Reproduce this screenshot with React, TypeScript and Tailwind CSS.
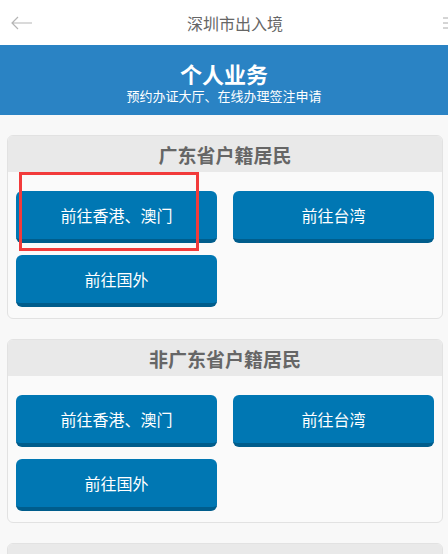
import React from "react";

const font = { fontFamily: '"Noto Sans CJK SC", "Noto Sans", sans-serif' };

function Btn({ label }: { label: string }) {
  return (
    <div className="h-[52px] rounded-[6px] bg-[#0077b3] border-b-4 border-[#005d8c] flex items-center justify-center text-white text-[16px] leading-none">
      {label}
    </div>
  );
}

function Card({ title, partial }: { title: string; partial?: boolean }) {
  return (
    <div className="w-[436px] rounded-[6px] border border-[#e2e2e2] bg-[#fafafa] overflow-hidden shrink-0">
      <div className="h-[36px] bg-[#e9e9e9] flex items-center justify-center text-[19px] font-bold text-[#666666] leading-none">
        {title}
      </div>
      {!partial && (
        <div className="pt-[19px] pb-[11px] px-[8px] grid grid-cols-2 gap-x-[16px] gap-y-[12px]">
          <Btn label="前往香港、澳门" />
          <Btn label="前往台湾" />
          <Btn label="前往国外" />
        </div>
      )}
    </div>
  );
}

export default function App() {
  return (
    <div className="relative w-[448px] h-[554px] overflow-hidden bg-[#f8f8f8]" style={font}>
      <div className="h-[45px] bg-white flex items-center overflow-hidden">
        <svg className="ml-[11px] shrink-0" width="21" height="14" viewBox="0 0 21 14">
          <path d="M1 7 H21 M7 1 L1 7 L7 13" stroke="#b5b5b5" strokeWidth="1.2" fill="none" />
        </svg>
        <div className="ml-[155px] shrink-0 text-[16px] text-[#666666] leading-none">深圳市出入境</div>
        <svg className="ml-[160px] shrink-0" width="16" height="12" viewBox="0 0 16 12">
          <path d="M0 1 H16 M0 6 H16 M0 11 H16" stroke="#aaaaaa" strokeWidth="1" fill="none" />
        </svg>
      </div>
      <div className="h-[70px] bg-[#2a83c4] flex flex-col items-center pt-[15px] text-white">
        <div className="text-[22px] font-bold leading-[26px]">个人业务</div>
        <div className="text-[13px] leading-[16px] mt-[2px]">预约办证大厅、在线办理签注申请</div>
      </div>
      <div className="flex flex-col gap-[20px] pt-[20px] pl-[7px]">
        <Card title="广东省户籍居民" />
        <Card title="非广东省户籍居民" />
        <Card title="在深外国人" partial />
      </div>
      <div className="absolute left-[19px] top-[172px] w-[180px] h-[79px] border-[3px] border-[#f23b3b]" />
    </div>
  );
}
